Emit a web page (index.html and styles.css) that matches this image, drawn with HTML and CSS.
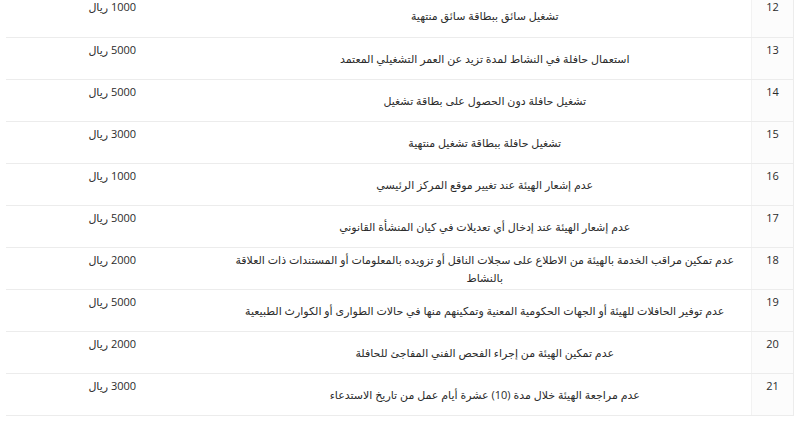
FILE: index.html
```html
<!DOCTYPE html>
<html lang="ar" dir="rtl">
<head>
<meta charset="utf-8" />
<title>جدول المخالفات</title>
<link rel="stylesheet" href="styles.css">
</head>
<body>
  <table class="fines">
    <colgroup>
      <col class="col-num">
      <col class="col-desc">
      <col class="col-amount">
    </colgroup>
    <tbody>
      <tr><td class="num">12</td><td class="desc">تشغيل سائق ببطاقة سائق منتهية</td><td class="amount">1000 ريال</td></tr>
      <tr><td class="num">13</td><td class="desc">استعمال حافلة في النشاط لمدة تزيد عن العمر التشغيلي المعتمد</td><td class="amount">5000 ريال</td></tr>
      <tr><td class="num">14</td><td class="desc">تشغيل حافلة دون الحصول على بطاقة تشغيل</td><td class="amount">5000 ريال</td></tr>
      <tr><td class="num">15</td><td class="desc">تشغيل حافلة ببطاقة تشغيل منتهية</td><td class="amount">3000 ريال</td></tr>
      <tr><td class="num">16</td><td class="desc">عدم إشعار الهيئة عند تغيير موقع المركز الرئيسي</td><td class="amount">1000 ريال</td></tr>
      <tr><td class="num">17</td><td class="desc">عدم إشعار الهيئة عند إدخال أي تعديلات في كيان المنشأة القانوني</td><td class="amount">5000 ريال</td></tr>
      <tr><td class="num">18</td><td class="desc">عدم تمكين مراقب الخدمة بالهيئة من الاطلاع على سجلات الناقل أو تزويده بالمعلومات أو المستندات ذات العلاقة بالنشاط</td><td class="amount">2000 ريال</td></tr>
      <tr><td class="num">19</td><td class="desc">عدم توفير الحافلات للهيئة أو الجهات الحكومية المعنية وتمكينهم منها في حالات الطوارى أو الكوارث الطبيعية</td><td class="amount">5000 ريال</td></tr>
      <tr><td class="num">20</td><td class="desc">عدم تمكين الهيئة من إجراء الفحص الفني المفاجئ للحافلة</td><td class="amount">2000 ريال</td></tr>
      <tr><td class="num">21</td><td class="desc">عدم مراجعة الهيئة خلال مدة (10) عشرة أيام عمل من تاريخ الاستدعاء</td><td class="amount">3000 ريال</td></tr>
    </tbody>
  </table>
</body>
</html>
```

FILE: styles.css
```css
html { background: #fff; }
body { margin: -5px 6px 0 6px; font-family: "Open Sans", "DejaVu Sans", sans-serif; font-size: 11px; line-height: 18px; color: #2b2b2b; }

.fines { width: 788px; border-collapse: collapse; table-layout: fixed; border-left: 1px solid #ececec; border-right: 1px solid #ececec; }
.col-num { width: 42px; }
.col-desc { width: 533px; }
.col-amount { width: 213px; }

.fines tr { height: 42px; }
.fines td { padding: 3px 8px 2px; border-bottom: 1px solid #ececec; vertical-align: top; text-align: center; }
.fines .num { background: #fcfcfc; border-left: 1px solid #f2f2f2; }
.fines .desc { vertical-align: middle; }
```
